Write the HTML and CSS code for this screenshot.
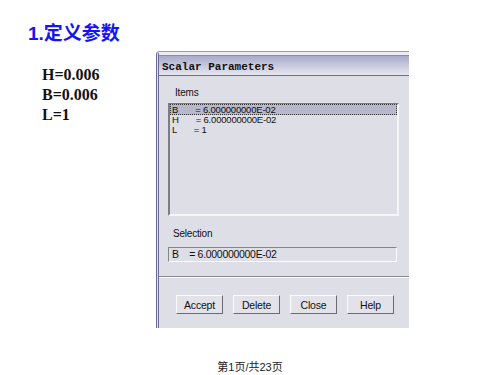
FILE: index.html
```html
<!DOCTYPE html>
<html lang="zh-CN">
<head>
  <meta charset="UTF-8">
  <meta name="viewport" content="width=device-width, initial-scale=1.0">
  <title>定义参数</title>
  <link rel="stylesheet" href="styles.css">
</head>
<body>
  <div class="slide">
    <div class="heading">1.定义参数</div>

    <div class="content">
      <!-- Parameter values -->
      <div class="params">
        <div>H=0.006</div>
        <div>B=0.006</div>
        <div>L=1</div>
      </div>

      <!-- Screenshot of the Patran dialog -->
      <div class="dialog">
        <div class="dialog-title">Scalar Parameters</div>
        <div class="dialog-body">
          <div class="field-label">Items</div>
          <div class="listbox">
            <div class="list-row selected">B       = 6.000000000E-02</div>
            <div class="list-row">H       = 6.000000000E-02</div>
            <div class="list-row">L       = 1</div>
          </div>

          <div class="field-label selection-label">Selection</div>
          <div class="textbox">B    = 6.000000000E-02</div>

          <div class="separator"></div>

          <div class="button-row">
            <button>Accept</button>
            <button>Delete</button>
            <button>Close</button>
            <button>Help</button>
          </div>
        </div>
      </div>
    </div>

    <div class="footer">第1页/共23页</div>
  </div>
</body>
</html>
```

FILE: styles.css
```css
body {
  margin: 0;
  background: #fff;
  font-family: "Liberation Sans", "Noto Sans CJK SC", sans-serif;
}

.slide {
  width: 500px;
  height: 375px;
  display: flex;
  flex-direction: column;
  box-sizing: border-box;
}

.heading {
  margin: 23px 0 0 28px;
  font-size: 19px;
  line-height: 22px;
  font-weight: bold;
  color: #1414f4;
}

.content {
  display: flex;
  margin-top: 6px;
  padding-left: 28px;
}

.params {
  width: 128px;
  box-sizing: border-box;
  padding: 14px 0 0 14px;
  font-family: "Liberation Serif", serif;
  font-weight: bold;
  font-size: 16px;
  line-height: 20px;
  color: #111;
}

/* dialog */
.dialog {
  width: 253px;
  height: 277px;
  box-sizing: border-box;
  display: flex;
  flex-direction: column;
  border-top: 1px solid #9a9aa8;
  border-left: 3px double #6c6c9c;
  border-top-left-radius: 4px;
  background: #dedee6;
}

.dialog-title {
  height: 24px;
  box-sizing: border-box;
  padding: 8px 0 0 3px;
  font-family: "Liberation Mono", monospace;
  font-weight: bold;
  font-size: 11px;
  line-height: 14px;
  color: #111;
  background: linear-gradient(to bottom, #ececf2 0, #ececf2 3px, #8c8cb2 3px, #8c8cb2 4px, #aaaacb 4px, #e6e6ef 100%);
  border-bottom: 1px solid #6e6e84;
}

.dialog-body {
  flex: 1;
  display: flex;
  flex-direction: column;
  font-size: 10px;
  color: #111;
}

.field-label {
  margin: 11px 0 0 16px;
  line-height: 12px;
  letter-spacing: -0.2px;
}

.selection-label {
  margin: 12px 0 0 14px;
}

.listbox {
  margin: 4px 0 0 9px;
  width: 231px;
  height: 113px;
  box-sizing: border-box;
  padding-top: 1px;
  border: 2px solid;
  border-color: #7c7c84 #f6f6f8 #f6f6f8 #7c7c84;
}

.list-row {
  height: 10px;
  line-height: 10px;
  padding-left: 2px;
  font-size: 9.5px;
  letter-spacing: -0.2px;
  white-space: pre;
}

.list-row.selected {
  margin-top: -2px;
  height: 11px;
  line-height: 12px;
  background: #b7b7cd;
  outline: 1px dotted #333;
  outline-offset: -1px;
}

.textbox {
  margin: 7px 0 0 9px;
  width: 229px;
  height: 15px;
  box-sizing: border-box;
  border: 1px solid;
  border-color: #85858c #fbfbfb #fbfbfb #85858c;
  padding-left: 3px;
  font-size: 10.5px;
  line-height: 13px;
  letter-spacing: -0.3px;
  white-space: pre;
}

.separator {
  margin-top: 14px;
  border-top: 1px solid #8a8a8e;
  border-bottom: 1px solid #f8f8fa;
}

.button-row {
  display: flex;
  gap: 10px;
  margin-top: 17px;
  padding-left: 17px;
}

.button-row button {
  width: 47px;
  height: 19px;
  padding: 0;
  font-family: "Liberation Sans", sans-serif;
  font-size: 10.5px;
  letter-spacing: -0.2px;
  color: #111;
  background: #e2e2e8;
  border: 1px solid;
  border-color: #fbfbfb #6a6a70 #6a6a70 #fbfbfb;
}

.footer {
  margin-top: auto;
  padding-bottom: 1px;
  text-align: center;
  font-size: 11px;
  line-height: 14px;
  color: #222;
}
```
